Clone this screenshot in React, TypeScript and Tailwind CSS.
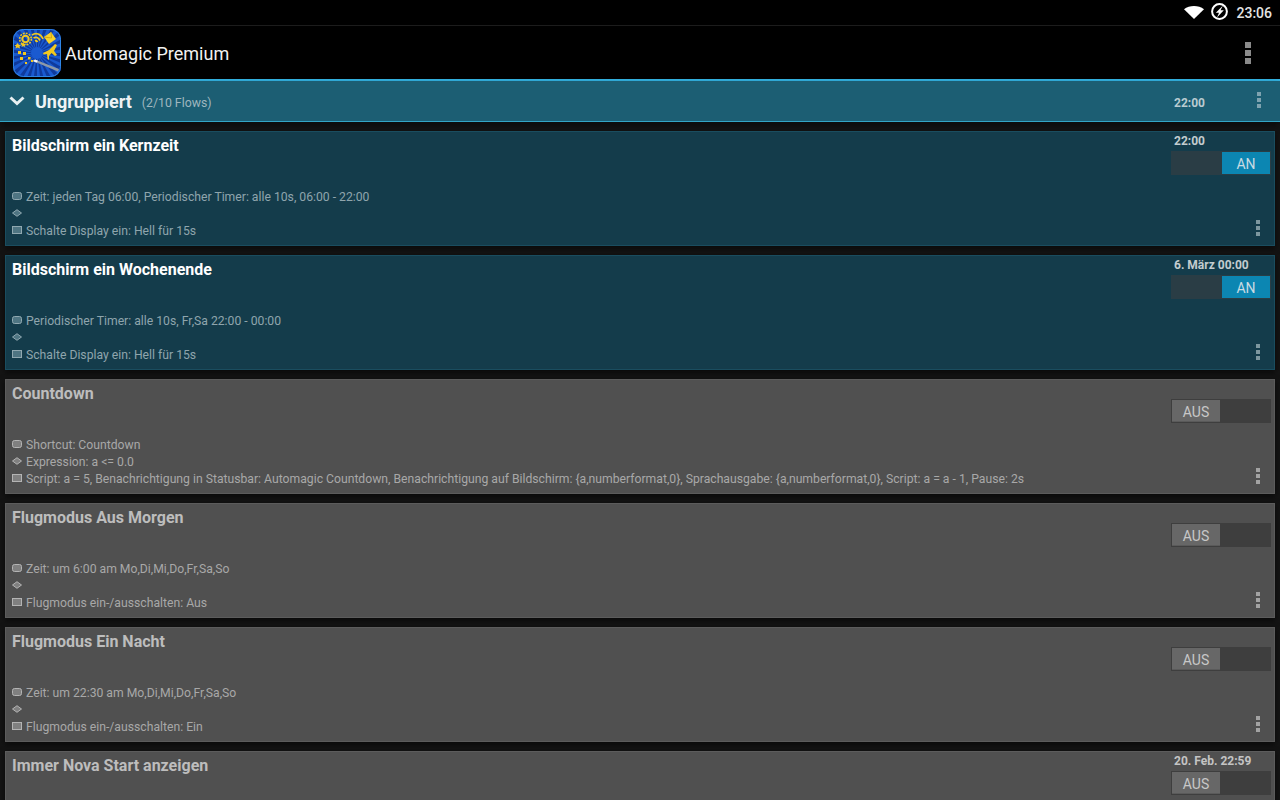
const flows = [
  {
    title: "Bildschirm ein Kernzeit",
    time: "22:00",
    on: true,
    trigger: "Zeit: jeden Tag 06:00, Periodischer Timer: alle 10s, 06:00 - 22:00",
    condition: "",
    action: "Schalte Display ein: Hell für 15s",
  },
  {
    title: "Bildschirm ein Wochenende",
    time: "6. März 00:00",
    on: true,
    trigger: "Periodischer Timer: alle 10s, Fr,Sa 22:00 - 00:00",
    condition: "",
    action: "Schalte Display ein: Hell für 15s",
  },
  {
    title: "Countdown",
    time: "",
    on: false,
    trigger: "Shortcut: Countdown",
    condition: "Expression: a <= 0.0",
    action:
      "Script: a = 5, Benachrichtigung in Statusbar: Automagic Countdown, Benachrichtigung auf Bildschirm: {a,numberformat,0}, Sprachausgabe: {a,numberformat,0}, Script: a = a - 1, Pause: 2s",
  },
  {
    title: "Flugmodus Aus Morgen",
    time: "",
    on: false,
    trigger: "Zeit: um 6:00 am Mo,Di,Mi,Do,Fr,Sa,So",
    condition: "",
    action: "Flugmodus ein-/ausschalten: Aus",
  },
  {
    title: "Flugmodus Ein Nacht",
    time: "",
    on: false,
    trigger: "Zeit: um 22:30 am Mo,Di,Mi,Do,Fr,Sa,So",
    condition: "",
    action: "Flugmodus ein-/ausschalten: Ein",
  },
  {
    title: "Immer Nova Start anzeigen",
    time: "20. Feb. 22:59",
    on: false,
    trigger: "",
    condition: "",
    action: "",
  },
];

const Dots = ({ color }: { color: string }) => (
  <svg width="4" height="16" viewBox="0 0 4 16" fill={color}>
    <rect y="0" width="4" height="4" />
    <rect y="6" width="4" height="4" />
    <rect y="12" width="4" height="4" />
  </svg>
);

const RowIcon = ({ kind, on }: { kind: string; on: boolean }) => (
  <svg
    width="10"
    height="8"
    viewBox="0 0 10 8"
    className="shrink-0 -mt-[4px]"
    fill={on ? "#4f7582" : "#808080"}
    stroke={on ? "#90a8b0" : "#b4b4b4"}
  >
    {kind === "trigger" && <rect x="0.5" y="0.5" width="9" height="7" rx="2" />}
    {kind === "condition" && <path d="M5 0.7 L9.5 4 L5 7.3 L0.5 4 Z" />}
    {kind === "action" && <rect x="0.5" y="0.5" width="9" height="7" />}
  </svg>
);

const Row = ({ kind, text, on }: { kind: string; text: string; on: boolean }) => (
  <div className={`flex items-center gap-[4px] h-[17px] text-[12.2px] whitespace-nowrap ${on ? "text-[#8fa5ad]" : "text-[#a8a8a8]"}`}>
    <RowIcon kind={kind} on={on} />
    <span>{text}</span>
  </div>
);

const Toggle = ({ on }: { on: boolean }) =>
  on ? (
    <div className="flex justify-end w-[100px] h-[24px] bg-[#2a3d45] p-px">
      <div className="w-[48px] pt-[2px] bg-[#0c86b2] text-[#c8dbe3] text-sm flex items-center justify-center">AN</div>
    </div>
  ) : (
    <div className="flex w-[100px] h-[24px] bg-[#3e3e3e] p-px">
      <div className="w-[48px] pt-[2px] bg-[#676767] border-b border-[#5a5a5a] text-[#c8c8c8] text-sm flex items-center justify-center">AUS</div>
    </div>
  );

const FlowCard = ({ flow }: { flow: (typeof flows)[number] }) => (
  <div
    className={`shrink-0 mx-[5px] h-[115px] flex justify-between border shadow-[0_2px_6px_rgba(0,0,0,0.6)] ${
      flow.on ? "bg-[#143c4b] border-[#1a4d5f]" : "bg-[#505050] border-[#5c5c5c]"
    }`}
  >
    <div className="flex flex-col justify-between pl-[6px] pt-[3px] pb-[5px]">
      <div className={`text-base leading-[22px] font-bold ${flow.on ? "text-white" : "text-[#bdbdbd]"}`}>{flow.title}</div>
      <div>
        <Row kind="trigger" text={flow.trigger} on={flow.on} />
        <Row kind="condition" text={flow.condition} on={flow.on} />
        <Row kind="action" text={flow.action} on={flow.on} />
      </div>
    </div>
    <div className="w-[103px] flex flex-col pt-[1px] pb-[9px]">
      <div className={`h-[18px] pl-[3px] text-xs leading-[17px] font-bold whitespace-nowrap ${flow.on ? "text-[#c3cccf]" : "text-[#c4c4c4]"}`}>
        {flow.time}
      </div>
      <Toggle on={flow.on} />
      <div className="mt-auto self-end pr-[14px]">
        <Dots color={flow.on ? "#7d979f" : "#a3a3a3"} />
      </div>
    </div>
  </div>
);

const AppLogo = () => {
  const rays = Array.from({ length: 24 }, (_, i) => (i * Math.PI * 2) / 24);
  return (
    <svg width="48" height="48" viewBox="0 0 48 48" className="shrink-0">
      <defs>
        <clipPath id="logo-clip">
          <rect width="48" height="48" rx="10" />
        </clipPath>
      </defs>
      <g clipPath="url(#logo-clip)">
        <rect width="48" height="48" fill="#1a5ad0" />
        {rays.map((a) => (
          <path
            key={a}
            d={`M24 24 L${24 + 60 * Math.cos(a)} ${24 + 60 * Math.sin(a)} L${24 + 60 * Math.cos(a + 0.13)} ${24 + 60 * Math.sin(a + 0.13)} Z`}
            fill="#0f3a9c"
          />
        ))}
        <circle cx="24" cy="24" r="6" fill="#1a5ad0" />
      </g>
      <rect x="0.5" y="0.5" width="47" height="47" rx="10" fill="none" stroke="#2f86e6" />
      {/* sun */}
      <circle cx="12.5" cy="10" r="3.2" fill="none" stroke="#f2c81e" strokeWidth="2" />
      <circle cx="12.5" cy="10" r="5.8" fill="none" stroke="#f2c81e" strokeWidth="1.6" strokeDasharray="1.8 1.2" />
      {/* wifi */}
      <path d="M19 6 C23 3 28 5 30 10 M20.5 9 C23 7.5 25.5 8.5 27 11.5 M22 12 C23 11.5 24 12 24.5 13" fill="none" stroke="#f2c81e" strokeWidth="1.7" />
      {/* mail */}
      <path d="M31 8 L38 3 L43 10 L36 15 Z" fill="#f7d22c" />
      <path d="M31 8 L38.5 9 L38 3" fill="none" stroke="#c79a12" strokeWidth="0.8" />
      {/* plane */}
      <path d="M30 24 L36 21 L42 15 L44 16 L41 22 L44 26 L42 27 L38.5 24 L36 27 L36 31 L34.5 30 L34 25 L30.5 25.5 Z" fill="#f2c81e" />
      {/* stars */}
      <path d="M3 16 L4.5 14 L6 16 L8 16 L6.5 17.5 L7 19.5 L4.5 18.5 L2.5 19.5 L3 17.5 L1.5 16 Z M9 15 L10.2 13.5 L11.5 15 L13 15 L11.7 16.3 L12 18 L10.2 17 L8.5 18 L9 16.3 L7.5 15 Z" fill="#f2c81e" />
      <rect x="5" y="22" width="3" height="3" fill="#f2c81e" />
      <rect x="10" y="23" width="3" height="3" fill="#f2c81e" />
      <rect x="7" y="28" width="3" height="3" fill="#f2c81e" />
      <rect x="15" y="28" width="2.5" height="2.5" fill="#f2c81e" />
      <rect x="12" y="33" width="2" height="2" fill="#f2c81e" />
      <rect x="18" y="31" width="2" height="2" fill="#f2c81e" />
      {/* wand */}
      <path d="M20 32 L22 30.5 L46 40 L45 42.5 Z" fill="#8d99a8" />
      <path d="M20 32 L22 30.5 L25 31.8 L23.5 33.8 Z" fill="#f4f4f4" />
    </svg>
  );
};

export default function App() {
  return (
    <div className="w-[1280px] h-[800px] overflow-hidden bg-[#141414] flex flex-col font-['Roboto',sans-serif]">
      <div className="shrink-0 h-[25px] bg-black flex items-center justify-end pr-[8px] text-sm font-medium text-[#e4e4e4]">
        <svg width="20" height="13" viewBox="0 0 20 13" fill="#fff" className="mr-[7px] -mt-px">
          <path d="M0 3.2 C5.5 -1 14.5 -1 20 3.2 L10 13 Z" />
        </svg>
        <svg width="17" height="17" viewBox="0 0 17 17" className="mr-[8px] -mt-[2px]">
          <circle cx="8.5" cy="8.5" r="7.4" fill="none" stroke="#fff" strokeWidth="2" />
          <path d="M12 2.5 L4.8 9.8 L8 9.8 L6 14.5 L12.8 7.2 L9.5 7.2 Z" fill="#fff" />
        </svg>
        <span className="mt-px">23:06</span>
      </div>
      <div className="shrink-0 h-[56px] pt-[1px] bg-black border-t border-[#1c1c1c] border-b-2 border-b-[#33b5e5] flex items-center pl-[13px] pr-[29px]">
        <AppLogo />
        <span className="ml-[4px] mt-[2px] text-lg text-[#f2f2f2]">Automagic Premium</span>
        <svg width="6" height="22" viewBox="0 0 6 22" fill="#8a8a8a" className="ml-auto">
          <rect y="0" width="6" height="6" />
          <rect y="8" width="6" height="6" />
          <rect y="16" width="6" height="6" />
        </svg>
      </div>
      <div className="shrink-0 h-[41px] pt-[3px] bg-[#1c5e73] border-b border-[#33a5c5] flex items-center shadow-[0_3px_6px_rgba(0,0,0,0.5)]">
        <svg width="16" height="10" viewBox="0 0 16 10" className="ml-[9px] -mt-[4px]">
          <path d="M1.5 1.5 L8 7.5 L14.5 1.5" fill="none" stroke="#e8f0f2" strokeWidth="3" />
        </svg>
        <span className="ml-[10px] -mt-[2px] text-lg font-bold text-[#eef3f5]">Ungruppiert</span>
        <span className="ml-[10px] mt-[2px] text-[12.3px] text-[#9fb6bf]">(2/10 Flows)</span>
        <span className="ml-auto text-xs font-bold text-[#b9cbd1]">22:00</span>
        <div className="ml-[52px] mr-[19px] -mt-[5px]">
          <Dots color="#7fa3b0" />
        </div>
      </div>
      <div className="flex flex-col gap-[9px] pt-[9px]">
        {flows.map((flow) => (
          <FlowCard key={flow.title} flow={flow} />
        ))}
      </div>
    </div>
  );
}
